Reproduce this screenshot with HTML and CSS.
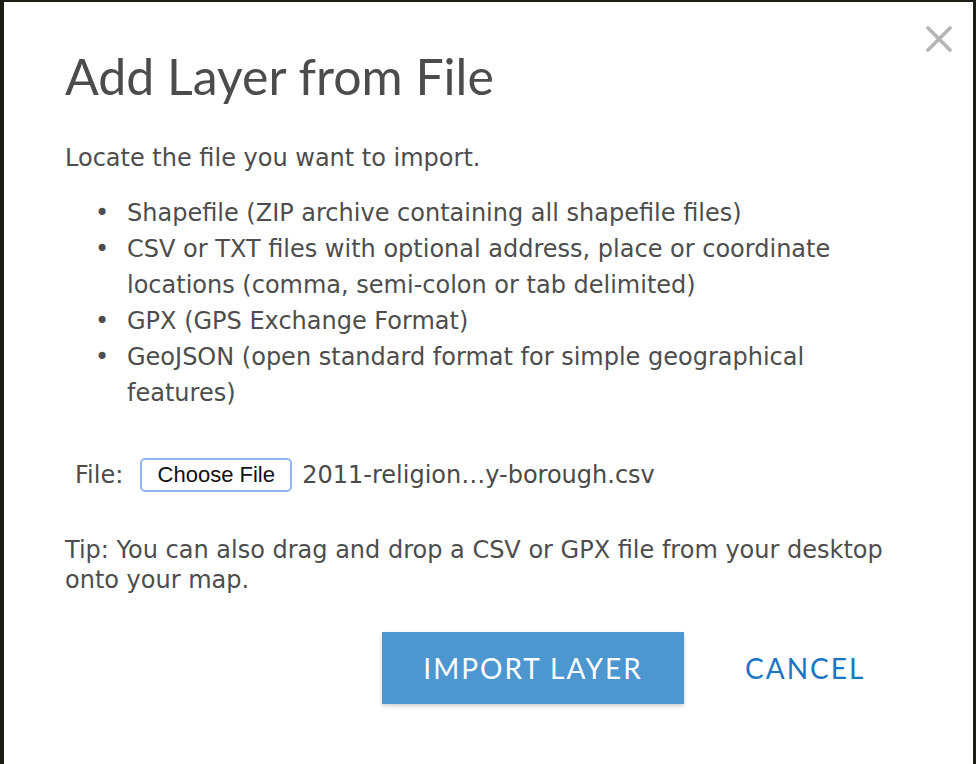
FILE: index.html
```html
<!DOCTYPE html>
<html>
<head>
<meta charset="utf-8">
<link rel="stylesheet" href="styles.css">
</head>
<body>
<div class="modal">
  <div class="close">
    <svg width="26" height="26" viewBox="0 0 26 26"><path d="M2 2 L24 24 M24 2 L2 24" stroke="#b4b4b4" stroke-width="3.6" stroke-linecap="round"/></svg>
  </div>
  <h1 class="title">Add Layer from File</h1>
  <p class="intro">Locate the file you want to import.</p>
  <ul class="formats">
    <li>Shapefile (ZIP archive containing all shapefile files)</li>
    <li>CSV or TXT files with optional address, place or coordinate locations (comma, semi-colon or tab delimited)</li>
    <li>GPX (GPS Exchange Format)</li>
    <li>GeoJSON (open standard format for simple geographical features)</li>
  </ul>
  <div class="file-row">
    <span class="file-label">File:</span>
    <span class="choose">Choose File</span>
    <span class="file-name">2011-religion…y-borough.csv</span>
  </div>
  <p class="tip">Tip: You can also drag and drop a CSV or GPX file from your desktop onto your map.</p>
  <div class="actions">
    <span class="btn-import">IMPORT LAYER</span>
    <span class="btn-cancel">CANCEL</span>
  </div>
</div>
</body>
</html>
```
FILE: styles.css
```css
html, body {
  margin: 0;
  padding: 0;
  height: 100%;
  background: #1b1d16;
  overflow: hidden;
}
.modal {
  position: relative;
  margin: 2px 0 0 4px;
  width: 969px;
  height: 770px;
  background: #ffffff;
  box-sizing: border-box;
  padding: 46px 0 0 61px;
  color: #4d4d4d;
  font-family: "DejaVu Sans", Verdana, sans-serif;
  font-size: 24px;
}
.close {
  position: absolute;
  top: 24px;
  left: 922px;
  width: 26px;
  height: 26px;
}
.title {
  margin: 0;
  font-family: Lato, "Open Sans", sans-serif;
  font-weight: 400;
  font-size: 50px;
  line-height: 56px;
  color: #4c4c4c;
}
.intro {
  margin: 39px 0 0 0;
  line-height: 30px;
}
.formats {
  list-style: none;
  margin: 22px 0 0 0;
  padding: 0 0 0 62px;
  width: 730px;
  line-height: 36px;
}
.formats li {
  position: relative;
}
.formats li::before {
  content: "•";
  position: absolute;
  left: -32px;
  top: 0;
}
.file-row {
  display: flex;
  align-items: center;
  margin-top: 47px;
  padding-left: 10px;
}
.file-label {
  margin-right: 17px;
}
.choose {
  display: inline-block;
  box-sizing: border-box;
  width: 152px;
  height: 34px;
  line-height: 30px;
  border: 2px solid #8fb8ea;
  border-radius: 5px;
  text-align: center;
  color: #111;
  font-family: "Liberation Sans", Arial, sans-serif;
  font-size: 22px;
  margin-right: 10px;
}
.file-name {
  color: #4a4a4a;
}
.tip {
  margin: 43px 0 0 0;
  width: 860px;
  line-height: 30px;
}
.actions {
  display: flex;
  align-items: center;
  margin-top: 37px;
  margin-left: 317px;
}
.btn-import {
  display: inline-block;
  width: 302px;
  height: 72px;
  line-height: 72px;
  text-align: center;
  background: #4c97d0;
  color: #fff;
  font-family: Lato, "Open Sans", sans-serif;
  font-size: 28px;
  letter-spacing: 2px;
  box-shadow: 0 2px 4px rgba(0,0,0,0.2);
}
.btn-cancel {
  margin-left: 61px;
  color: #1a75c2;
  font-family: Lato, "Open Sans", sans-serif;
  font-size: 28px;
  letter-spacing: 2px;
}
```
